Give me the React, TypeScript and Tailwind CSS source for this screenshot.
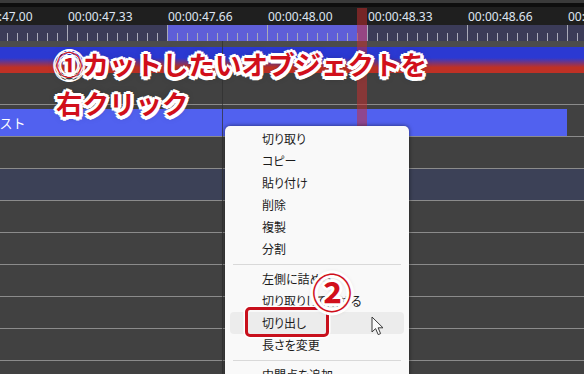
import React from 'react';

const labels = ['00:00:47.00', '00:00:47.33', '00:00:47.66', '00:00:48.00', '00:00:48.33', '00:00:48.66', '00:00:49.00'];
const ticks = Array.from({ length: 58 }, (_, i) => ({ x: 7.5 + i * 10, major: (i - 6) % 10 === 0 }));

const groups = [
  ['切り取り', 'コピー', '貼り付け', '削除', '複製', '分割'],
  ['左側に詰める', '切り取りして詰める', '切り出し', '長さを変更'],
  ['中間点を追加'],
];

function Ruler() {
  return (
    <div className="relative h-[16px] flex">
      <div className="w-[167px] bg-[#3b3b58]" />
      <div className="w-[200px] bg-[#5e5ed8]" />
      <div className="flex-1 bg-[#3b3b58]" />
      <svg className="absolute inset-0" width="584" height="16">
        {ticks.map(t => (
          <line key={t.x} x1={t.x} x2={t.x} y1={t.major ? 0 : 8} y2={16} stroke="#a9a9b8" strokeWidth="1" />
        ))}
      </svg>
    </div>
  );
}

function Row({ tint, children }: { tint?: boolean; children?: React.ReactNode }) {
  return (
    <div className={`h-[32px] border-b border-[#8b8b8b] ${tint ? 'bg-[#3c4157]' : 'bg-[#414141]'}`}>
      {children}
    </div>
  );
}

function ContextMenu() {
  return (
    <div className="absolute left-[225px] top-[126px] w-[184px] h-[260px] bg-[#f9f9f9] rounded-[5px] shadow-[0_0_4px_rgba(0,0,0,0.55)] pt-[2px] font-['Noto_Sans_CJK_JP',sans-serif] text-[12px] text-[#1b1b1b] [font-feature-settings:'palt']">
      {groups.map((items, gi) => (
        <div key={gi}>
          {gi > 0 && (
            <div className="h-[8px] flex items-center mx-[8px]">
              <div className="h-px w-full bg-[#d9d9d9]" />
            </div>
          )}
          {items.map(item => (
            <div
              key={item}
              className={`h-[22px] mx-[5px] pl-[32px] flex items-center rounded-[4px] ${item === '切り出し' ? 'bg-[#ececec]' : ''}`}
            >
              {item}
            </div>
          ))}
        </div>
      ))}
    </div>
  );
}

export default function App() {
  return (
    <div className="relative w-[584px] h-[374px] overflow-hidden bg-[#414141] font-['Noto_Sans',sans-serif]">
      <div className="h-[3px] bg-[#3a3a3a]" />
      <div className="h-[4px] bg-[#0e0e0e]" />
      <div className="h-[18px] bg-[#1f1f1f] flex ml-[-32px] text-[12px] leading-[18px] text-[#dfe6f2] whitespace-nowrap">
        {labels.map(l => (
          <div key={l} className="w-[100px] shrink-0 pt-[1px]">{l}</div>
        ))}
      </div>
      <Ruler />
      <div className="h-[6px] bg-[#4c4c4c]" />
      <div className="h-[26px] bg-[linear-gradient(to_bottom,#2b39d2_0%,#2b39d2_42%,#bf3125_78%,#bf3125_100%)]" />
      <Row />
      <div className="h-[32px] border-b border-[#8b8b8b] bg-[#414141] pt-[4px]">
        <div className="w-[567px] h-[27px] bg-[#5161ef] flex items-center overflow-hidden font-['Noto_Sans_CJK_JP',sans-serif] text-[13px] text-white whitespace-nowrap">
          <span className="ml-[-26px]">テキスト</span>
        </div>
      </div>
      <Row />
      <Row tint />
      <Row />
      <Row />
      <Row />
      <Row />
      <Row />
      <Row />

      {/* grid marker */}
      <div className="absolute left-[222px] top-[41px] w-px h-[333px] bg-[#2f2f2f] opacity-70" />

      {/* playhead */}
      <div className="absolute left-[357px] top-[8px] w-[10px] h-[129px] bg-[rgba(205,45,45,0.5)]" />

      <ContextMenu />

      {/* annotation 1 */}
      <div className="absolute left-[56px] top-[44px] font-['Noto_Sans_CJK_JP',sans-serif] font-bold text-[26.5px] leading-[39px] text-[#d10f1b] whitespace-nowrap [text-shadow:3.5px_0_0_#fff,-3.5px_0_0_#fff,0_3.5px_0_#fff,0_-3.5px_0_#fff,2.5px_2.5px_0_#fff,-2.5px_-2.5px_0_#fff,2.5px_-2.5px_0_#fff,-2.5px_2.5px_0_#fff,0_0_7px_rgba(0,0,0,0.55)]">
        <div>①カットしたいオブジェクトを</div>
        <div>右クリック</div>
      </div>

      {/* highlight box */}
      <div className="absolute left-[245px] top-[307px] w-[84px] h-[30px] border-[3px] border-[#c8101c] rounded-[5px] shadow-[0_0_0_1.5px_#fff]" />

      {/* annotation 2 */}
      <div className="absolute left-[306px] top-[265px] w-[52px] h-[52px] flex items-center justify-center font-['Noto_Sans_CJK_JP',sans-serif] font-bold text-[40px] leading-none text-[#d10f1b] [text-shadow:3px_0_0_#fff,-3px_0_0_#fff,0_3px_0_#fff,0_-3px_0_#fff,2px_2px_0_#fff,-2px_-2px_0_#fff,2px_-2px_0_#fff,-2px_2px_0_#fff,0_0_5px_rgba(0,0,0,0.35)]">
        ②
      </div>

      {/* mouse cursor */}
      <svg className="absolute left-[371px] top-[316px]" width="14" height="21" viewBox="0 0 14 21">
        <path d="M1 1 L1 16 L4.6 12.6 L7.2 18.6 L9.6 17.6 L7.1 11.8 L12 11.8 Z" fill="#fafafa" stroke="#3a3a3a" strokeWidth="1" strokeLinejoin="round" />
      </svg>
    </div>
  );
}
